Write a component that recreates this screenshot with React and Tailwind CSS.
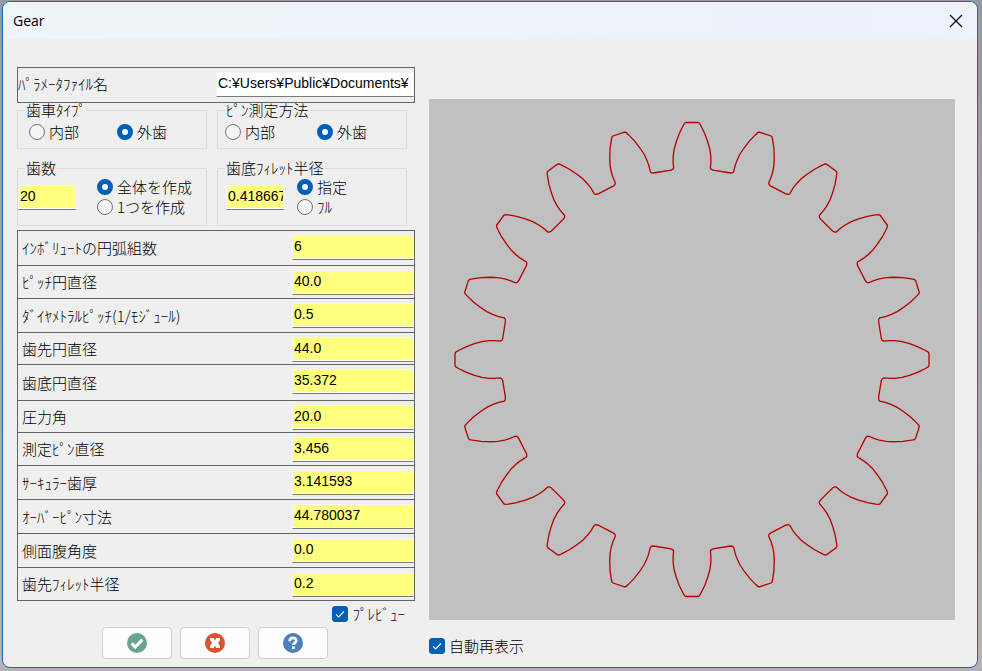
import { useState } from 'react'

const CJK = "font-['Noto_Sans_CJK_JP',sans-serif] font-light"

const params = [
  { id: 'arcs', label: 'ｲﾝﾎﾞﾘｭｰﾄの円弧組数', value: '6', height: 'h-[35px]' },
  { id: 'pitch', label: 'ﾋﾟｯﾁ円直径', value: '40.0', height: 'h-[33px]' },
  { id: 'diametral', label: 'ﾀﾞｲﾔﾒﾄﾗﾙﾋﾟｯﾁ(1/ﾓｼﾞｭｰﾙ)', value: '0.5', height: 'h-[34px]' },
  { id: 'outer', label: '歯先円直径', value: '44.0', height: 'h-[32px]' },
  { id: 'root', label: '歯底円直径', value: '35.372', height: 'h-[36px]' },
  { id: 'pressure', label: '圧力角', value: '20.0', height: 'h-[32px]' },
  { id: 'pin', label: '測定ﾋﾟﾝ直径', value: '3.456', height: 'h-[33px]' },
  { id: 'circular', label: 'ｻｰｷｭﾗｰ歯厚', value: '3.141593', height: 'h-[34px]' },
  { id: 'overpin', label: 'ｵｰﾊﾞｰﾋﾟﾝ寸法', value: '44.780037', height: 'h-[34px]' },
  { id: 'helix', label: '側面腹角度', value: '0.0', height: 'h-[34px]' },
  { id: 'tipfillet', label: '歯先ﾌｨﾚｯﾄ半径', value: '0.2', height: 'h-[33px]' },
]

// right flank of one tooth pointing up, tip to root, centre of the gear at 0,0
const flank = [
  [6, -237], [7.4, -236.3], [9, -233.5], [12.7, -226], [15.8, -217.5], [17.9, -210],
  [18.8, -203], [18.9, -198], [18.4, -191.5], [19.1, -190.3], [21, -189.3],
]

function gearPath(teeth) {
  const tooth = [...flank.map(([x, y]) => [-x, y]).reverse(), ...flank]
  const points = []
  for (let i = 0; i < teeth; i++) {
    const a = (i * 2 * Math.PI) / teeth
    const c = Math.cos(a)
    const s = Math.sin(a)
    tooth.forEach(([x, y]) => points.push(`${(x * c - y * s).toFixed(2)} ${(x * s + y * c).toFixed(2)}`))
  }
  return `M${points.join('L')}Z`
}

function Field({ id, label, value, className }) {
  const [text, setText] = useState(value)
  return (
    <input
      id={id}
      type="text"
      aria-label={label}
      value={text}
      onChange={e => setText(e.target.value)}
      className={`h-[25px] border border-[#f6f6f6] border-b-[#7a7a7a] px-px pb-1 font-['Liberation_Sans',sans-serif] text-sm leading-4 text-black shadow-[inset_0_-1px_#fff] outline-none ${className}`}
    />
  )
}

function Radio({ name, label, checked, onChange, className = '' }) {
  return (
    <label className={`flex h-4 items-center gap-1 whitespace-nowrap ${className}`}>
      <input
        type="radio"
        name={name}
        checked={checked}
        onChange={onChange}
        className="size-4 shrink-0 appearance-none rounded-full border border-[#757575] bg-[#f4f4f4] checked:border-[5px] checked:border-[#005fb8] checked:bg-white"
      />
      {label}
    </label>
  )
}

function Check({ label }) {
  const [on, setOn] = useState(true)
  return (
    <label className="flex h-4 items-center gap-1 whitespace-nowrap">
      <span className="grid size-4 shrink-0">
        <input
          type="checkbox"
          checked={on}
          onChange={() => setOn(!on)}
          className="col-start-1 row-start-1 size-4 appearance-none rounded-[3px] border border-[#757575] bg-white checked:border-[#005fb8] checked:bg-[#005fb8]"
        />
        {on && (
          <svg viewBox="0 0 16 16" className="pointer-events-none col-start-1 row-start-1 size-4">
            <path d="M4 8.3l2.6 2.6L12 5.5" fill="none" stroke="#fff" strokeWidth="1.1" />
          </svg>
        )}
      </span>
      {label}
    </label>
  )
}

function Group({ title, className, children }) {
  return (
    <fieldset className={`w-[190px] border border-[#dcdcdc] ${className}`}>
      <legend className="ml-[7px] px-px leading-[14px]">{title}</legend>
      {children}
    </fieldset>
  )
}

function DialogButton({ label, color, children }) {
  return (
    <button
      type="button"
      aria-label={label}
      className="flex h-8 w-[70px] items-center justify-center rounded border border-[#d0d0d0] bg-[#fdfdfd] hover:bg-white"
    >
      <svg viewBox="0 0 20 20" className={`size-5 ${color}`}>
        <circle cx="10" cy="10" r="10" fill="currentColor" />
        {children}
      </svg>
    </button>
  )
}

export default function App() {
  const [gearType, setGearType] = useState('外歯')
  const [pinMethod, setPinMethod] = useState('外歯')
  const [range, setRange] = useState('全体を作成')
  const [fillet, setFillet] = useState('指定')

  return (
    <div className="flex min-h-screen bg-linear-to-b from-[#929ba3] to-[#b4b4b4] pt-px pr-1 pb-[3px] pl-0.5">
      <div className={`flex flex-1 flex-col overflow-hidden rounded-lg border border-[#1766c4] bg-[#efefef] text-[15px] leading-4 text-black ${CJK}`}>
        <header className="flex h-[37px] items-center justify-between bg-linear-to-r from-[#eef4f7] to-[#edf2fb] pr-3.5 pl-2.5">
          <h1 className="font-['Open_Sans',sans-serif] text-sm font-normal">Gear</h1>
          <button type="button" aria-label="Close">
            <svg viewBox="0 0 14 14" className="size-3.5">
              <path d="M1 1l12 12M13 1L1 13" stroke="#111" strokeWidth="1.3" />
            </svg>
          </button>
        </header>

        <main className="flex gap-3.5 pr-[22px] pl-3.5">
          <div className="w-[398px] shrink-0 pt-7">
            <div className="flex h-9 items-start justify-between border border-[#646464] pt-1">
              <label htmlFor="file" className="pt-1">ﾊﾟﾗﾒｰﾀﾌｧｲﾙ名</label>
              <Field id="file" value="C:¥Users¥Public¥Documents¥" className="w-[198px] bg-white" />
            </div>

            <div className="flex gap-2.5">
              <Group title="歯車ﾀｲﾌﾟ" className="h-[46px]">
                <div className="flex pt-[7px] pl-[11px]">
                  <Radio name="type" label="内部" checked={gearType === '内部'} onChange={() => setGearType('内部')} className="w-[88px]" />
                  <Radio name="type" label="外歯" checked={gearType === '外歯'} onChange={() => setGearType('外歯')} />
                </div>
              </Group>
              <Group title="ﾋﾟﾝ測定方法" className="h-[46px]">
                <div className="flex pt-[7px] pl-[7px]">
                  <Radio name="pin" label="内部" checked={pinMethod === '内部'} onChange={() => setPinMethod('内部')} className="w-[92px]" />
                  <Radio name="pin" label="外歯" checked={pinMethod === '外歯'} onChange={() => setPinMethod('外歯')} />
                </div>
              </Group>
            </div>

            <div className="mt-3 flex gap-2.5">
              <Group title="歯数" className="h-[65px]">
                <div className="flex gap-5 pt-1">
                  <Field label="歯数" value="20" className="mt-1.5 w-[59px] bg-[#ffff80]" />
                  <div className="flex flex-col gap-1">
                    <Radio name="range" label="全体を作成" checked={range === '全体を作成'} onChange={() => setRange('全体を作成')} />
                    <Radio name="range" label="1つを作成" checked={range === '1つを作成'} onChange={() => setRange('1つを作成')} />
                  </div>
                </div>
              </Group>
              <Group title="歯底ﾌｨﾚｯﾄ半径" className="h-[65px]">
                <div className="flex gap-3 pt-1 pl-2">
                  <Field label="歯底ﾌｨﾚｯﾄ半径" value="0.418667" className="mt-1.5 w-[59px] bg-[#ffff80]" />
                  <div className="flex flex-col gap-1">
                    <Radio name="fillet" label="指定" checked={fillet === '指定'} onChange={() => setFillet('指定')} />
                    <Radio name="fillet" label="ﾌﾙ" checked={fillet === 'ﾌﾙ'} onChange={() => setFillet('ﾌﾙ')} />
                  </div>
                </div>
              </Group>
            </div>

            {/* Gear parameters */}
            <div className="mt-1 border-x border-t border-[#646464]">
              {params.map(p => (
                <div key={p.id} className={`flex justify-between border-b border-[#646464] ${p.height}`}>
                  <label htmlFor={p.id} className="self-center pl-1">{p.label}</label>
                  <Field id={p.id} value={p.value} className="mt-1 w-[122px] bg-[#ffff80]" />
                </div>
              ))}
            </div>

            <div className="mt-[5px] flex justify-end pr-2.5">
              <Check label="ﾌﾟﾚﾋﾞｭｰ" />
            </div>

            <div className="mt-[5px] flex gap-2 pl-[85px]">
              <DialogButton label="OK" color="text-[#68a590]">
                <path d="M4.6 10.4l3.7 3.6 7-7.4" fill="none" stroke="#fff" strokeWidth="3.2" />
              </DialogButton>
              <DialogButton label="キャンセル" color="text-[#d9532f]">
                <path d="M5 5h3.6L10 7.2 11.4 5H15v2l-2 3 2 3v2h-3.6L10 12.8 8.6 15H5v-2l2-3-2-3z" fill="#fff" />
              </DialogButton>
              <DialogButton label="ヘルプ" color="text-[#4a80bb]">
                <path d="M6.7 8.2C6.7 3.8 13.3 4 13.3 7.5c0 2.3-2.9 2.4-2.9 4.6" fill="none" stroke="#fff" strokeWidth="2.7" />
                <path d="M8.9 13.4h2.9v2.8H8.9z" fill="#fff" />
              </DialogButton>
            </div>
          </div>

          <div className="flex min-w-0 flex-1 flex-col gap-[18px] pt-[60px]">
            <svg viewBox="-263 -260.5 526 521" className="w-full bg-[#c0c0c0]">
              <path d={gearPath(20)} fill="none" stroke="#b40000" strokeWidth="1.3" />
            </svg>
            <Check label="自動再表示" />
          </div>
        </main>
      </div>
    </div>
  )
}
